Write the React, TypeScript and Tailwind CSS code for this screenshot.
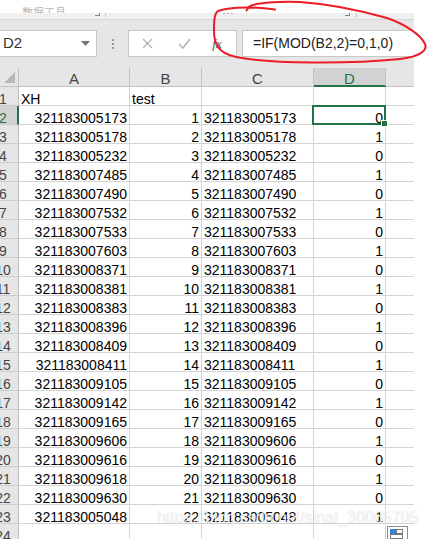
import React from 'react';

const data: [string, number, number][] = [
  ['321183005173', 1, 0],
  ['321183005178', 2, 1],
  ['321183005232', 3, 0],
  ['321183007485', 4, 1],
  ['321183007490', 5, 0],
  ['321183007532', 6, 1],
  ['321183007533', 7, 0],
  ['321183007603', 8, 1],
  ['321183008371', 9, 0],
  ['321183008381', 10, 1],
  ['321183008383', 11, 0],
  ['321183008396', 12, 1],
  ['321183008409', 13, 0],
  ['321183008411', 14, 1],
  ['321183009105', 15, 0],
  ['321183009142', 16, 1],
  ['321183009165', 17, 0],
  ['321183009606', 18, 1],
  ['321183009616', 19, 0],
  ['321183009618', 20, 1],
  ['321183009630', 21, 0],
  ['321183005048', 22, 1],
];

const cell = 'h-[19px] border-r border-b border-[#d4d4d4] overflow-hidden whitespace-nowrap text-[14px] leading-[13px] pt-[6px]';

function RowHead({ n, active }: { n: number; active?: boolean }) {
  return (
    <div
      className={`w-[19px] h-[19px] shrink-0 overflow-hidden border-b border-[#cdcdcd] ${
        active ? 'bg-[#d2d2d2] border-r-2 border-r-[#217346] text-[#217346]' : 'bg-[#e6e6e6] border-r border-r-[#bcbcbc] text-[#444]'
      }`}
    >
      <div className="w-[24px] -ml-[9px] text-center text-[14px] leading-[13px] pt-[6px]">{n}</div>
    </div>
  );
}

function Row({ n, a, b, c, d, active }: { n: number; a: string; b: string; c: string; d: string; active?: boolean }) {
  return (
    <div className="flex h-[19px]">
      <RowHead n={n} active={active} />
      <div className={`${cell} w-[111px] ${n === 1 ? 'pl-[2px]' : 'text-right pr-[2px]'}`}>{a}</div>
      <div className={`${cell} w-[72px] ${n === 1 ? 'pl-[2px]' : 'text-right pr-[2px]'}`}>{b}</div>
      <div className={`${cell} w-[112px] pl-[2px]`}>{c}</div>
      <div className={`${cell} w-[72px] text-right pr-[2px] ${active ? 'relative overflow-visible' : ''}`}>
        {d}
        {active && (
          <div className="absolute -left-[2px] -top-[1px] -right-[1px] -bottom-[1px] border-2 border-[#217346]">
            <div className="absolute -right-[4px] -bottom-[4px] w-[7px] h-[7px] bg-[#217346] border border-white" />
          </div>
        )}
      </div>
      <div className="h-[19px] flex-1 border-b border-[#d4d4d4]" />
    </div>
  );
}

function ColHead({ label, w, active }: { label: string; w: string; active?: boolean }) {
  return (
    <div
      className={`${w} h-[19px] overflow-hidden text-center text-[15px] leading-[22px] border-r border-r-[#c2c2c2] ${
        active ? 'bg-[#d2d2d2] text-[#217346] border-b-2 border-b-[#217346]' : 'bg-[#e6e6e6] text-[#444] border-b border-b-[#c2c2c2]'
      }`}
    >
      {label}
    </div>
  );
}

export default function App() {
  return (
    <div className="relative w-[429px] h-[539px] overflow-hidden bg-white font-['Liberation_Sans',Arial,sans-serif] text-black">
      <div className="w-[414px]">
        {/* ribbon bottom edge */}
        <div className="h-[13px] bg-white overflow-hidden pl-[22px] pt-[7px]">
          <span className="block text-[11px] leading-[11px] text-[#b4b4b4] font-['Noto_Sans_CJK_SC',sans-serif]">数据工具</span>
        </div>
        <div className="h-[7px] bg-[#f0f0f0] border-b border-[#d6d6d6] flex items-start">
          <div className="ml-[95px] w-[5px] h-[3px] border-r border-b border-[#888]" />
          <div className="ml-[5px] w-px h-[4px] bg-[#c8c8c8]" />
          <div className="ml-[117px] flex gap-[2px]">
            <div className="w-[2px] h-[1px] bg-[#aaa]" />
            <div className="w-[2px] h-[1px] bg-[#aaa]" />
            <div className="w-[2px] h-[1px] bg-[#aaa]" />
          </div>
          <div className="ml-[112px] w-[5px] h-[3px] border-r border-b border-[#888]" />
          <div className="ml-[6px] w-px h-[5px] bg-[#c8c8c8]" />
        </div>

        {/* formula bar */}
        <div className="h-[48px] bg-[#e6e6e6] flex items-start pt-[10px]">
          <div className="w-[97px] h-[27px] bg-white border border-l-0 border-[#c6c6c6] flex items-center justify-between pl-[3px] pr-[6px]">
            <span className="text-[15px] text-[#333]">D2</span>
            <svg width="9" height="5" viewBox="0 0 9 5">
              <path d="M0 0 L9 0 L4.5 5 Z" fill="#777" />
            </svg>
          </div>
          <div className="w-[31px] h-[27px] flex flex-col items-center justify-center gap-[2px]">
            <div className="w-[2px] h-[2px] bg-[#999]" />
            <div className="w-[2px] h-[2px] bg-[#999]" />
            <div className="w-[2px] h-[2px] bg-[#999]" />
          </div>
          <div className="w-[109px] h-[27px] bg-white border border-[#c6c6c6] flex items-center">
            <div className="w-[37px] flex justify-center">
              <svg width="11" height="11" viewBox="0 0 11 11">
                <path d="M1 1 L10 10 M10 1 L1 10" stroke="#b4b4b4" strokeWidth="1.4" />
              </svg>
            </div>
            <div className="w-[36px] flex justify-center">
              <svg width="13" height="11" viewBox="0 0 13 11">
                <path d="M1 6 L5 10 L12 1" stroke="#b4b4b4" strokeWidth="1.6" fill="none" />
              </svg>
            </div>
            <div className="w-[30px] flex justify-center">
              <span className="text-[13px] italic text-[#555] font-['Liberation_Serif',serif]">fx</span>
            </div>
          </div>
          <div className="ml-[5px] flex-1 h-[27px] bg-white border border-r-0 border-[#c6c6c6] flex items-center pl-[10px] text-[14px] text-[#222]">
            =IF(MOD(B2,2)=0,1,0)
          </div>
        </div>

        {/* column headers */}
        <div className="flex h-[19px]">
          <div className="w-[19px] h-[19px] bg-[#e6e6e6] border-r border-b border-[#c2c2c2] flex items-end justify-end pr-[3px] pb-[3px]">
            <svg width="11" height="11" viewBox="0 0 11 11">
              <path d="M11 0 L11 11 L0 11 Z" fill="#b8b8b8" />
            </svg>
          </div>
          <ColHead label="A" w="w-[111px]" />
          <ColHead label="B" w="w-[72px]" />
          <ColHead label="C" w="w-[112px]" />
          <ColHead label="D" w="w-[72px]" active />
          <div className="flex-1 h-[19px] bg-[#e6e6e6] border-b border-[#c2c2c2]" />
        </div>

        {/* rows */}
        <Row n={1} a="XH" b="test" c="" d="" />
        {data.map(([id, t, m], i) => (
          <Row key={id} n={i + 2} a={id} b={String(t)} c={id} d={String(m)} active={i === 0} />
        ))}
        <Row n={24} a="" b="" c="" d="" />
      </div>

      {/* red hand-drawn ellipse */}
      <svg className="absolute left-0 top-0 pointer-events-none" width="429" height="100" viewBox="0 0 429 100">
        <path
          d="M275 9.5 C258 7, 232 6, 218 11 C214 14, 214 22, 214 31 C214 44, 218 53, 236 57 C270 64, 350 64, 400 59 C418 57, 428 51, 425 44 C421 35, 405 24, 387 18 C355 9, 330 4, 300 2 C278 1, 256 3, 250 6 C248 8, 247 9, 246.5 10.5"
          fill="none"
          stroke="#ec1c24"
          strokeWidth="2"
          strokeLinecap="round"
          strokeLinejoin="round"
        />
      </svg>

      {/* watermark */}
      <div className="absolute left-[157px] top-[510px] text-[16px] leading-[16px] whitespace-nowrap text-white/80 [text-shadow:0_0_1px_rgba(150,150,150,0.5)] pointer-events-none">
        https://blog.csdn.net/sinat_30065705
      </div>

      {/* quick analysis */}
      <svg className="absolute left-[387px] top-[526px]" width="21" height="15" viewBox="0 0 21 15">
        <rect x="0.5" y="0.5" width="20" height="14" fill="white" stroke="#8c8c8c" />
        <rect x="3" y="3" width="6" height="5" fill="#3b7de0" />
        <rect x="9.5" y="3.5" width="6" height="4" fill="none" stroke="#777" />
        <rect x="3.5" y="8.5" width="12" height="4" fill="none" stroke="#777" />
      </svg>
    </div>
  );
}
